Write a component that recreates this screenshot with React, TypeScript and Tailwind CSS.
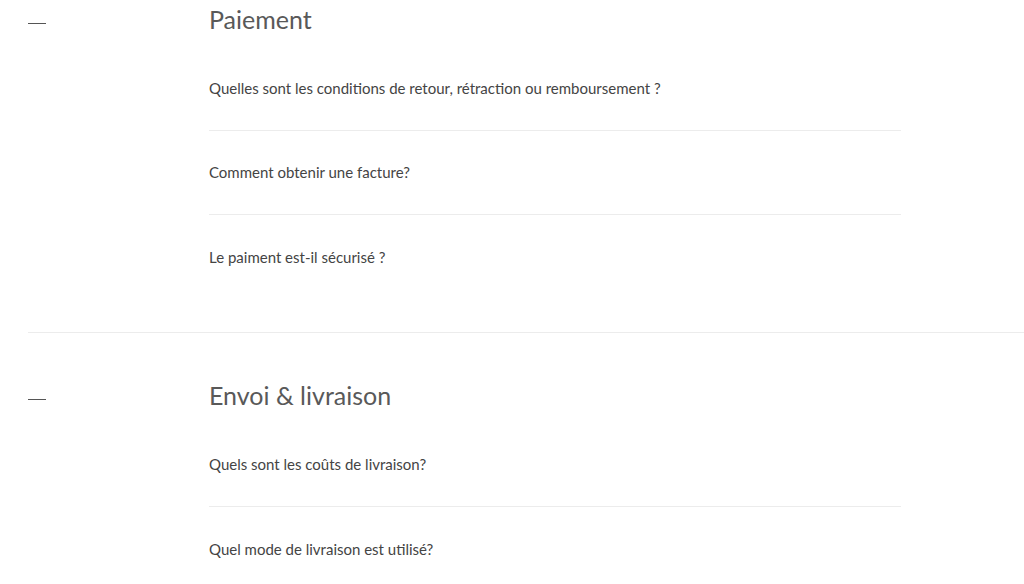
const SECTIONS = [
  {
    title: 'Paiement',
    questions: [
      'Quelles sont les conditions de retour, rétraction ou remboursement ?',
      'Comment obtenir une facture?',
      'Le paiment est-il sécurisé ?',
    ],
  },
  {
    title: 'Envoi & livraison',
    questions: ['Quels sont les coûts de livraison?', 'Quel mode de livraison est utilisé?'],
  },
];

function Section({ title, questions, first }: { title: string; questions: string[]; first?: boolean }) {
  return (
    <section className={`ml-[28px] flex ${first ? 'pt-[3px]' : 'border-t border-[#ececec] pt-[46px]'} pb-[33px]`}>
      <div className="w-[181px] shrink-0 pt-[20px]">
        <div className="h-px w-[18px] bg-[#555]" />
      </div>
      <div className="w-[692px]">
        <h2 className="mb-[12px] text-[25px] leading-[32px] text-[#595959]">{title}</h2>
        <ul>
          {questions.map((q, i) => (
            <li
              key={q}
              className={`flex h-[84px] items-center text-[15px] text-[#444] ${i < questions.length - 1 ? 'border-b border-[#ececec]' : ''}`}
            >
              {q}
            </li>
          ))}
        </ul>
      </div>
    </section>
  );
}

export default function App() {
  return (
    <div className="h-[584px] overflow-hidden bg-white" style={{ fontFamily: 'Lato, "Liberation Sans", sans-serif' }}>
      {SECTIONS.map((s, i) => (
        <Section key={s.title} title={s.title} questions={s.questions} first={i === 0} />
      ))}
    </div>
  );
}
